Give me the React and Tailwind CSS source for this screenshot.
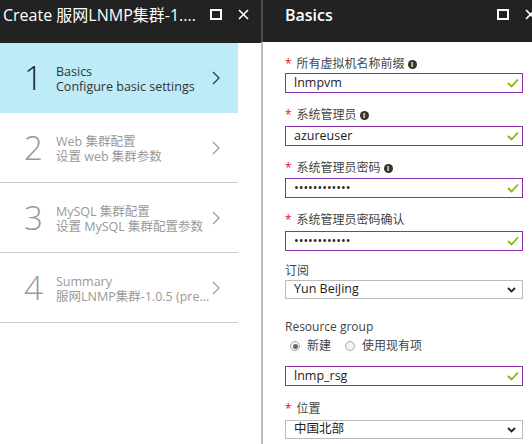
import React from 'react';

const font = { fontFamily: '"Open Sans", "Noto Sans CJK SC", sans-serif' };

const steps = [
  { n: '1', title: 'Basics', sub: 'Configure basic settings', active: true },
  { n: '2', title: 'Web 集群配置', sub: '设置 web 集群参数' },
  { n: '3', title: 'MySQL 集群配置', sub: '设置 MySQL 集群配置参数' },
  { n: '4', title: 'Summary', sub: '服网LNMP集群-1.0.5 (pre...' },
];

const MaxIcon = () => (
  <svg width="12" height="11" viewBox="0 0 12 11">
    <rect x="1" y="1" width="10" height="9" fill="none" stroke="white" strokeWidth="2" />
  </svg>
);

const CloseIcon = () => (
  <svg width="11" height="11" viewBox="0 0 11 11">
    <path d="M1 1L10 10M10 1L1 10" stroke="white" strokeWidth="1.6" />
  </svg>
);

const Chevron = ({ color }) => (
  <svg width="8" height="14" viewBox="0 0 8 14">
    <path d="M1 1l6 6-6 6" fill="none" stroke={color} strokeWidth="1.2" />
  </svg>
);

const Check = () => (
  <svg width="12" height="10" viewBox="0 0 12 10">
    <path d="M1 5l3.5 3.5L11 1.5" fill="none" stroke="#7fba00" strokeWidth="1.8" />
  </svg>
);

const Info = () => (
  <span className="ml-[3px] inline-flex h-[9px] w-[9px] items-center justify-center rounded-full bg-[#333] text-[7px] font-bold leading-none text-white">
    i
  </span>
);

const Label = ({ text, req, info, className = '' }) => (
  <div className={`flex h-[16px] items-center text-[12px] text-[#444] ${className}`}>
    {req && <span className="mr-[5px] text-[#e81123]">*</span>}
    <span>{text}</span>
    {info && <Info />}
  </div>
);

const TextInput = ({ value, className = '' }) => (
  <div className={`flex h-[20px] w-[238px] items-center justify-between border border-[#8d2fa8] pl-[8px] pr-[3px] text-[12.5px] text-[#222] ${className}`}>
    <span>{value}</span>
    <Check />
  </div>
);

const Select = ({ value, className = '' }) => (
  <div className={`flex h-[19px] w-[238px] items-center justify-between border border-[#bbb] pl-[8px] pr-[6px] text-[12.5px] text-[#222] ${className}`}>
    <span>{value}</span>
    <svg width="9" height="6" viewBox="0 0 9 6">
      <path d="M1 1l3.5 3.5L8 1" fill="none" stroke="#222" strokeWidth="1.8" />
    </svg>
  </div>
);

const Radio = ({ checked, text }) => (
  <span className="mr-[14px] flex items-center text-[12px] text-[#444]">
    <span className="mr-[7px] flex h-[10px] w-[10px] items-center justify-center rounded-full border border-[#aaa] bg-[#f4f4f4]">
      {checked && <span className="h-[5px] w-[5px] rounded-full bg-[#666]" />}
    </span>
    {text}
  </span>
);

export default function App() {
  return (
    <div className="flex h-[444px] w-[532px] overflow-hidden bg-white" style={font}>
      <div className="flex w-[261px] shrink-0 flex-col">
        <div className="flex h-[43px] shrink-0 items-start justify-between bg-[#222] pl-[3px] pr-[12px] pt-[5px]">
          <span className="text-[16px] leading-[20px] text-white">Create 服网LNMP集群-1....</span>
          <div className="mt-[4px] flex items-center gap-[16px]">
            <MaxIcon />
            <CloseIcon />
          </div>
        </div>
        <div className="w-[238px]">
          {steps.map((s) => (
            <div
              key={s.n}
              className={`flex h-[70px] items-center border-b ${s.active ? 'border-[#bdebf7] bg-[#bdebf7] text-[#333]' : 'border-[#ccc] text-[#999]'}`}
            >
              <span className={`w-[56px] pl-[24px] text-[33px] font-light leading-none ${s.active ? 'text-[#222]' : 'text-[#999]'}`}>
                {s.n}
              </span>
              <div className="flex-1 pt-[3px] text-[12.5px] leading-[15px]">
                <div>{s.title}</div>
                <div>{s.sub}</div>
              </div>
              <div className="pr-[18px]">
                <Chevron color={s.active ? '#333' : '#999'} />
              </div>
            </div>
          ))}
        </div>
      </div>
      <div className="flex w-[2px] shrink-0 flex-col">
        <div className="h-[42px] shrink-0 bg-[#4d4d4d]" />
        <div className="flex-1 bg-[#b9b9b9]" />
      </div>
      <div className="flex min-w-0 flex-1 flex-col">
        <div className="flex h-[42px] shrink-0 items-start bg-[#222] pl-[22px] pt-[5px]">
          <span className="text-[16px] font-semibold leading-[20px] text-white">Basics</span>
          <div className="ml-auto mr-[-4px] mt-[4px] flex items-center gap-[16px]">
            <MaxIcon />
            <CloseIcon />
          </div>
        </div>
        <div className="pl-[22px] pt-[14px]">
          <Label text="所有虚拟机名称前缀" req info />
          <TextInput value="lnmpvm" className="mt-[1px]" />
          <Label text="系统管理员" req info className="mt-[14px]" />
          <TextInput value="azureuser" className="mt-[3px]" />
          <Label text="系统管理员密码" req info className="mt-[14px]" />
          <TextInput value="••••••••••••" className="mt-[2px]" />
          <Label text="系统管理员密码确认" req className="mt-[14px]" />
          <TextInput value="••••••••••••" className="mt-[3px]" />
          <Label text="订阅" className="mt-[12px]" />
          <Select value="Yun BeiJing" className="mt-[1px]" />
          <Label text="Resource group" className="mt-[20px]" />
          <div className="mt-[3px] flex h-[16px] items-center pl-[5px]">
            <Radio checked text="新建" />
            <Radio text="使用现有项" />
          </div>
          <TextInput value="lnmp_rsg" className="mt-[12px]" />
          <Label text="位置" req className="mt-[15px]" />
          <Select value="中国北部" className="mt-[3px]" />
        </div>
      </div>
    </div>
  );
}
